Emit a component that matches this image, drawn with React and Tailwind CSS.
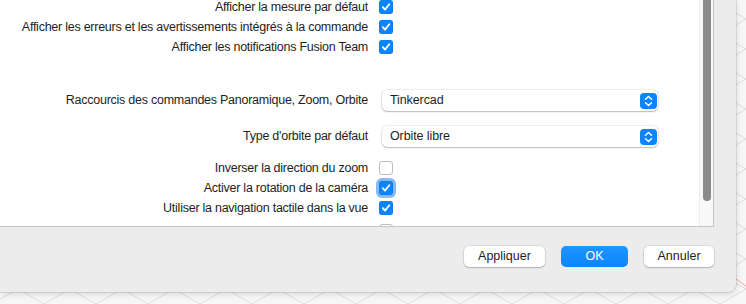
import React from 'react';

const font = { fontFamily: '"Liberation Sans", Arial, sans-serif' };

function Check({ checked, focus }) {
  return (
    <span
      className={
        'flex h-[14px] w-[14px] items-center justify-center rounded-[3px] ' +
        (checked
          ? 'bg-[#0a84ff] shadow-[inset_0_0_0_0.5px_rgba(0,0,0,0.12)]'
          : 'border border-[#bdbdbd] bg-white') +
        (focus ? ' ring-[3px] ring-[#8ab9ef]' : '')
      }
    >
      {checked && (
        <svg width="10" height="10" viewBox="0 0 10 10">
          <path d="M1.8 5.2 L4 7.6 L8.3 2.3" fill="none" stroke="white" strokeWidth="1.8" strokeLinecap="round" strokeLinejoin="round" />
        </svg>
      )}
    </span>
  );
}

function CheckRow({ label, checked, focus }) {
  return (
    <div className="flex h-[20px] items-center">
      <div className="w-[368px] shrink-0 whitespace-nowrap text-right text-[12.5px] tracking-[-0.25px] text-[#1e1e1e]">{label}</div>
      <div className="ml-[11px]">
        <Check checked={checked} focus={focus} />
      </div>
    </div>
  );
}

function SelectRow({ label, value }) {
  return (
    <div className="flex h-[21px] items-center">
      <div className="w-[368px] shrink-0 whitespace-nowrap text-right text-[12.5px] tracking-[-0.25px] text-[#1e1e1e]">{label}</div>
      <div className="ml-[14px] flex h-[21px] w-[276px] items-center justify-between rounded-[5px] bg-white pl-[8px] pr-[1px] text-[12.5px] tracking-[-0.1px] text-[#1e1e1e] shadow-[0_0_0_0.5px_rgba(0,0,0,0.14),0_1px_1.5px_rgba(0,0,0,0.22)]">
        <span>{value}</span>
        <span className="flex h-[16px] w-[17px] items-center justify-center rounded-[4px] bg-[#0a84ff]">
          <svg width="9" height="12" viewBox="0 0 9 12">
            <path d="M1.5 4.3 L4.5 1.5 L7.5 4.3 M1.5 7.7 L4.5 10.5 L7.5 7.7" fill="none" stroke="white" strokeWidth="1.5" strokeLinecap="round" strokeLinejoin="round" />
          </svg>
        </span>
      </div>
    </div>
  );
}

function Button({ children, primary, w }) {
  return (
    <button
      className={
        'flex h-[21px] items-center justify-center rounded-[5px] text-[12.5px] ' +
        w +
        (primary
          ? ' bg-gradient-to-b from-[#1f96ff] to-[#0a84ff] text-white'
          : ' bg-white text-[#1e1e1e] shadow-[0_0_0_0.5px_rgba(0,0,0,0.14),0_1px_1.5px_rgba(0,0,0,0.2)]')
      }
    >
      {children}
    </button>
  );
}

export default function App() {
  return (
    <div className="relative h-[304px] w-[746px] overflow-hidden bg-[#f6f6f6]" style={font}>
      {/* viewport grid behind the dialog */}
      <svg className="absolute inset-0" width="746" height="304">
        <defs>
          <pattern id="hex" width="52" height="30" patternUnits="userSpaceOnUse" x="-8" y="4">
            <path d="M0 0 L26 15 L52 0 M0 30 L26 15 L52 30" fill="none" stroke="#dcdcdc" strokeWidth="1" />
          </pattern>
        </defs>
        <rect width="746" height="304" fill="url(#hex)" />
        <path d="M736 279 L746 286" stroke="#f3a6a6" strokeWidth="1" />
      </svg>

      <div className="relative flex h-[292px] w-[736px] flex-col rounded-br-[7px] bg-[#ececec] shadow-[0_0_0_0.5px_rgba(0,0,0,0.18),0_2px_6px_rgba(0,0,0,0.12)]">
        <div className="flex h-[227px] w-[714px] border-b border-r border-[#c6c6c6] bg-white">
          <div className="flex-1 overflow-hidden">
            <div className="-mt-[3px]">
              <CheckRow label="Afficher la mesure par défaut" checked />
              <CheckRow label="Afficher les erreurs et les avertissements intégrés à la commande" checked />
              <CheckRow label="Afficher les notifications Fusion Team" checked />
              <div className="mt-[33px] flex flex-col gap-[15px]">
                <SelectRow label="Raccourcis des commandes Panoramique, Zoom, Orbite" value="Tinkercad" />
                <SelectRow label="Type d'orbite par défaut" value="Orbite libre" />
              </div>
              <div className="mt-[11px]">
                <CheckRow label="Inverser la direction du zoom" />
                <CheckRow label="Activer la rotation de la caméra" checked focus />
                <CheckRow label="Utiliser la navigation tactile dans la vue" checked />
                <div className="mt-[3px]">
                  <CheckRow label="Autoriser le déplacement de la caméra lors de la sélection" />
                </div>
              </div>
            </div>
          </div>
          <div className="flex w-[14px] shrink-0 justify-center border-l border-[#ececec] bg-[#f8f8f8]">
            <div className="-mt-[6px] h-[207px] w-[8px] rounded-full bg-[#8a8a8a]" />
          </div>
        </div>

        <div className="mt-[19px] flex justify-end gap-[16px] pr-[22px]">
          <Button w="w-[81px]">Appliquer</Button>
          <Button w="w-[67px]" primary>OK</Button>
          <Button w="w-[70px]">Annuler</Button>
        </div>
      </div>
    </div>
  );
}
